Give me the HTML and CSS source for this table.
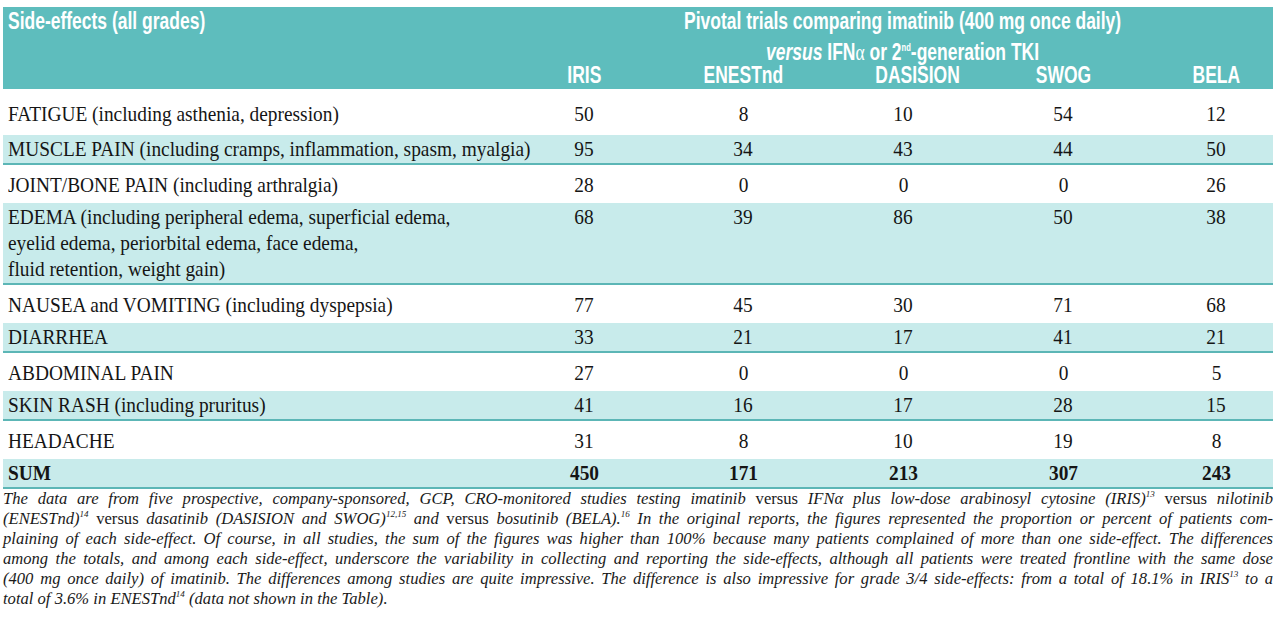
FILE: index.html
```html
<!DOCTYPE html>
<html>
<head>
<meta charset="utf-8">
<link rel="stylesheet" href="styles.css">
</head>
<body>
<div class="wrap">
<table class="tbl">
  <colgroup>
    <col class="c0"><col class="c1"><col class="c2"><col class="c3"><col class="c4"><col class="c5">
  </colgroup>
  <thead>
    <tr class="h1">
      <th class="lab" rowspan="2"><span class="hl">Side-effects (all grades)</span></th>
      <th class="grp" colspan="5">
        <div class="l1"><span class="hc">Pivotal trials comparing imatinib (400 mg once daily)</span></div>
        <div class="l2"><span class="hc"><i>versus</i> IFN<span class="alpha">α</span> or 2<sup>nd</sup>-generation TKI</span></div>
      </th>
    </tr>
    <tr class="h2">
      <th><span class="hc">IRIS</span></th><th><span class="hc">ENESTnd</span></th><th><span class="hc">DASISION</span></th><th><span class="hc">SWOG</span></th><th class="last"><span class="hc">BELA</span></th>
    </tr>
  </thead>
  <tbody>
    <tr class="first">
      <td class="name"><span class="sq">FATIGUE (including asthenia, depression)</span></td>
      <td><span class="sn">50</span></td><td><span class="sn">8</span></td><td><span class="sn">10</span></td><td><span class="sn">54</span></td><td class="last"><span class="sn">12</span></td>
    </tr>
    <tr class="alt">
      <td class="name"><span class="sq">MUSCLE PAIN (including cramps, inflammation, spasm, myalgia)</span></td>
      <td><span class="sn">95</span></td><td><span class="sn">34</span></td><td><span class="sn">43</span></td><td><span class="sn">44</span></td><td class="last"><span class="sn">50</span></td>
    </tr>
    <tr>
      <td class="name"><span class="sq">JOINT/BONE PAIN (including arthralgia)</span></td>
      <td><span class="sn">28</span></td><td><span class="sn">0</span></td><td><span class="sn">0</span></td><td><span class="sn">0</span></td><td class="last"><span class="sn">26</span></td>
    </tr>
    <tr class="alt">
      <td class="name"><span class="sq">EDEMA (including peripheral edema, superficial edema,<br>eyelid edema, periorbital edema, face edema,<br>fluid retention, weight gain)</span></td>
      <td><span class="sn">68</span></td><td><span class="sn">39</span></td><td><span class="sn">86</span></td><td><span class="sn">50</span></td><td class="last"><span class="sn">38</span></td>
    </tr>
    <tr>
      <td class="name"><span class="sq">NAUSEA and VOMITING (including dyspepsia)</span></td>
      <td><span class="sn">77</span></td><td><span class="sn">45</span></td><td><span class="sn">30</span></td><td><span class="sn">71</span></td><td class="last"><span class="sn">68</span></td>
    </tr>
    <tr class="alt">
      <td class="name"><span class="sq">DIARRHEA</span></td>
      <td><span class="sn">33</span></td><td><span class="sn">21</span></td><td><span class="sn">17</span></td><td><span class="sn">41</span></td><td class="last"><span class="sn">21</span></td>
    </tr>
    <tr>
      <td class="name"><span class="sq">ABDOMINAL PAIN</span></td>
      <td><span class="sn">27</span></td><td><span class="sn">0</span></td><td><span class="sn">0</span></td><td><span class="sn">0</span></td><td class="last"><span class="sn">5</span></td>
    </tr>
    <tr class="alt">
      <td class="name"><span class="sq">SKIN RASH (including pruritus)</span></td>
      <td><span class="sn">41</span></td><td><span class="sn">16</span></td><td><span class="sn">17</span></td><td><span class="sn">28</span></td><td class="last"><span class="sn">15</span></td>
    </tr>
    <tr>
      <td class="name"><span class="sq">HEADACHE</span></td>
      <td><span class="sn">31</span></td><td><span class="sn">8</span></td><td><span class="sn">10</span></td><td><span class="sn">19</span></td><td class="last"><span class="sn">8</span></td>
    </tr>
    <tr class="alt sum">
      <td class="name"><span class="sq">SUM</span></td>
      <td><span class="sn">450</span></td><td><span class="sn">171</span></td><td><span class="sn">213</span></td><td><span class="sn">307</span></td><td class="last"><span class="sn">243</span></td>
    </tr>
  </tbody>
</table>
<div class="note">
  <div class="ln">The data are from five prospective, company-sponsored, GCP, CRO-monitored studies testing imatinib <span class="up">versus</span> IFNα plus low-dose arabinosyl cytosine (IRIS)<sup>13</sup> <span class="up">versus</span> nilotinib</div>
  <div class="ln">(ENESTnd)<sup>14</sup> <span class="up">versus</span> dasatinib (DASISION and SWOG)<sup>12,15</sup> and <span class="up">versus</span> bosutinib (BELA).<sup>16</sup> In the original reports, the figures represented the proportion or percent of patients com-</div>
  <div class="ln">plaining of each side-effect. Of course, in all studies, the sum of the figures was higher than 100% because many patients complained of more than one side-effect. The differences</div>
  <div class="ln">among the totals, and among each side-effect, underscore the variability in collecting and reporting the side-effects, although all patients were treated frontline with the same dose</div>
  <div class="ln">(400 mg once daily) of imatinib. The differences among studies are quite impressive. The difference is also impressive for grade 3/4 side-effects: from a total of 18.1% in IRIS<sup>13</sup> to a</div>
  <div class="ln end">total of 3.6% in ENESTnd<sup>14</sup> (data not shown in the Table).</div>
</div>
</div>
</body>
</html>
```
FILE: styles.css
```css
html, body {
  margin: 0;
  padding: 0;
  background: #ffffff;
}

.wrap {
  width: 1270px;
  padding: 7px 0 0 3px;
}

.tbl {
  width: 1270px;
  border-collapse: collapse;
  table-layout: fixed;
  font-family: "Liberation Serif", "Times New Roman", serif;
  color: #151515;
}

.c0 { width: 541px; }
.c1 { width: 80px; }
.c2 { width: 238px; }
.c3 { width: 82px; }
.c4 { width: 238px; }
.c5 { width: 91px; }

/* header */
.tbl thead th {
  background: #5ebdbd;
  color: #ffffff;
  font-family: "Liberation Sans", Arial, sans-serif;
  font-weight: bold;
  font-size: 23px;
  line-height: 22px;
  padding: 0;
  vertical-align: top;
  text-align: center;
  white-space: nowrap;
}

.hl {
  display: inline-block;
  transform: scaleX(0.76);
  transform-origin: left center;
}

.hc {
  display: inline-block;
  transform: scaleX(0.76);
  transform-origin: center center;
}

.tbl thead th.lab {
  text-align: left;
  padding: 3px 5px 0 5px;
}

.tbl thead th.grp {
  padding: 3px 11px 0 0;
}

.l2 {
  margin-top: 9px;
}

.l2 i {
  font-style: italic;
}

.alpha {
  font-family: "Liberation Serif", serif;
  font-weight: normal;
  font-size: 23px;
}

.l2 sup {
  font-size: 10px;
  line-height: 0;
  vertical-align: 9px;
}

.tbl thead tr.h2 th {
  line-height: 21px;
  padding: 1px 0 3px 0;
}

.tbl thead tr.h2 th.last {
  padding-right: 23px;
}

/* body */
.tbl td {
  font-size: 22px;
  line-height: 26px;
  padding: 7px 0 5px 0;
  text-align: center;
  vertical-align: top;
  white-space: nowrap;
}

.tbl td.name {
  text-align: left;
  padding-left: 5px;
}

.tbl td.last {
  padding-right: 23px;
}

.tbl tr.first td {
  padding-top: 12px;
  padding-bottom: 8px;
}

.tbl tr.alt td {
  background: #c8ebeb;
  padding-top: 1px;
  padding-bottom: 1px;
  border-bottom: 2px solid #5cb6b6;
}

.tbl tr.sum td {
  font-weight: bold;
}

.sq {
  display: inline-block;
  transform: scaleX(0.88);
  transform-origin: left center;
}

.sn {
  display: inline-block;
  transform: scaleX(0.88);
  transform-origin: center center;
}

/* footnote */
.note {
  font-family: "Liberation Serif", "Times New Roman", serif;
  font-style: italic;
  font-size: 16.6px;
  line-height: 20px;
  color: #1a1a1a;
  padding-top: 0;
}

.ln {
  text-align: justify;
  text-align-last: justify;
}

.ln.end {
  text-align-last: left;
}

.up {
  font-style: normal;
}

.note sup {
  font-size: 9px;
  line-height: 0;
  vertical-align: 7px;
}
```
